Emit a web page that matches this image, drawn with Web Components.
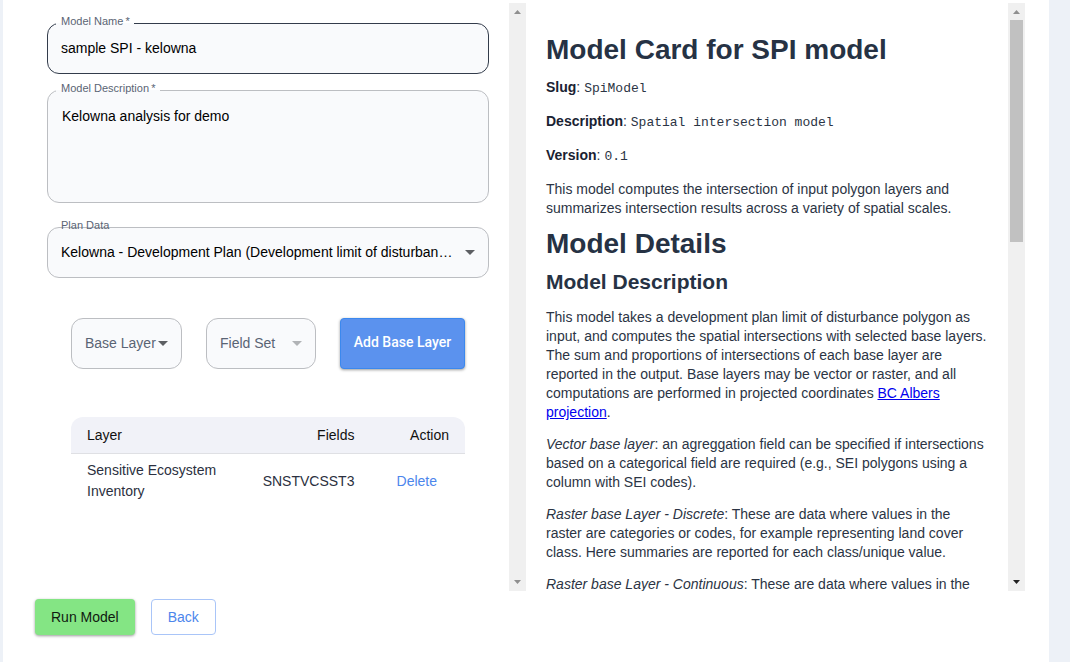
<!DOCTYPE html>
<html lang="en">
<head>
<meta charset="utf-8">
<title>Run Model</title>
<style>
  body { margin: 0; background: #fff; color: #2b3444; font: 14px/19px "Liberation Sans", Arial, sans-serif; }
</style>
</head>
<body>
<model-page>
  <scroll-pane slot="form">
    <model-form></model-form>
  </scroll-pane>
  <scroll-pane slot="card" thumb>
    <model-card></model-card>
  </scroll-pane>
  <action-button slot="actions" kind="run">Run Model</action-button>
  <action-button slot="actions" kind="outline">Back</action-button>
</model-page>

<script>
  const define = (name, html, setup) => {
    const template = document.createElement('template');
    template.innerHTML = '<style>*{box-sizing:border-box}</style>' + html;
    customElements.define(name, class extends HTMLElement {
      constructor() {
        super();
        this.attachShadow({ mode: 'open' }).append(template.content.cloneNode(true));
      }
      connectedCallback() {
        if (setup && !this.ready) { this.ready = true; setup(this, this.shadowRoot); }
      }
    });
  };

  define('model-page', `
    <style>
      :host { display: flex; height: 100vh; background: #edf1f7; margin-right: 9px; padding: 0 21px 0 3px; box-sizing: border-box; }
      main { flex: 1; min-width: 0; display: flex; flex-direction: column; background: #fff; padding: 3px 24px 0 32px; }
      .panes { flex: 1; min-height: 0; display: grid; grid-template-columns: 491fr 499fr; grid-template-rows: minmax(0, 1fr); }
      footer { display: flex; gap: 16px; padding: 8px 0 27px; }
    </style>
    <main>
      <div class="panes"><slot name="form"></slot><slot name="card"></slot></div>
      <footer><slot name="actions"></slot></footer>
    </main>`);

  define('scroll-pane', `
    <style>
      :host { display: flex; min-width: 0; }
      .view { flex: 1; min-width: 0; overflow: hidden; }
      .bar { width: 17px; background: #f0f0f0; display: flex; flex-direction: column; align-items: center; }
      svg { display: block; width: 17px; height: 17px; fill: #8f8f8f; }
      .track { flex: 1; width: 13px; }
      .thumb { display: none; height: 40%; background: #c1c1c1; }
      :host([thumb]) .thumb { display: block; }
      :host([thumb]) .down { fill: #222; }
    </style>
    <div class="view"><slot></slot></div>
    <div class="bar" aria-hidden="true">
      <svg viewBox="0 0 17 17"><path d="M5 11h7L8.500 7z"/></svg>
      <div class="track"><div class="thumb"></div></div>
      <svg class="down" viewBox="0 0 17 17"><path d="M5 6h7L8.500 10z"/></svg>
    </div>`);

  define('action-button', `
    <style>
      :host { display: block; }
      button { font: inherit; height: 36px; padding: 0 16px; border-radius: 4px; border: 0; cursor: pointer; width: 100%; }
      :host([kind=run]) button { background: #84e584; color: #101a10; box-shadow: 0 1px 3px rgba(0,0,0,.4); }
      :host([kind=outline]) button { background: #fff; color: #4c86ec; border: 1px solid #a9c5f8; }
      :host([kind=primary]) button { background: #5b92ee; color: #fff; border: 1px solid #3b88ee; font-family: Roboto, sans-serif; font-weight: 500; height: 51px; padding: 0 8px 2px; box-shadow: 0 1px 3px rgba(0,0,0,.4); }
    </style>
    <button type="button"><slot></slot></button>`);

  const fieldBox = `
      :host { display: block; position: relative; min-width: 0; }
      input, textarea, select { display: block; width: 100%; height: 51px; margin: 0; padding: 0 13px; font: inherit; color: #000;
        background: #f9fafc; border: 1px solid #bcbec2; border-radius: 12px; outline: 0; appearance: none; }
      label { position: absolute; z-index: 1; left: 9px; top: -8px; padding: 0 4px 0 5px; font-size: 11px; line-height: 13px; color: #5a6474; white-space: nowrap; }`;

  define('text-field', `
    <style>${fieldBox}
      label { background: linear-gradient(#fff 8px, #f9fafc 8px); }
      input { padding-bottom: 2px; }
      textarea { height: 113px; padding: 16px 14px; resize: none; }
      :host([active]) input { border-color: #333c4b; }
    </style>
    <label for="control"></label>`,
    (host, root) => {
      const multi = host.hasAttribute('multiline');
      const control = document.createElement(multi ? 'textarea' : 'input');
      control.id = 'control';
      control.value = host.getAttribute('value');
      root.querySelector('label').textContent = host.getAttribute('label') + '\u2009*';
      root.append(control);
    });

  define('select-field', `
    <style>${fieldBox}
      select { padding-right: 32px; text-overflow: ellipsis; }
      :host([compact]) select { color: #5a6474; padding-right: 12px; opacity: 1; }
      svg { position: absolute; right: 14px; top: 23px; width: 10px; height: 5px; fill: #5d5f63; pointer-events: none; }
      :host([disabled]) svg { fill: #b1b3b6; }
    </style>
    <select id="control"><option></option></select>
    <svg viewBox="0 0 10 5" aria-hidden="true"><path d="M0 0h10L5 5z"/></svg>`,
    (host, root) => {
      const select = root.querySelector('select');
      select.options[0].textContent = host.getAttribute('value');
      select.disabled = host.hasAttribute('disabled');
      const text = host.getAttribute('label');
      if (text) {
        const label = document.createElement('label');
        label.htmlFor = 'control';
        label.textContent = text;
        root.append(label);
      } else select.setAttribute('aria-label', host.getAttribute('value'));
    });

  define('layer-table', `
    <style>
      :host { display: block; }
      table { width: 100%; border-collapse: separate; border-spacing: 0; }
      th { background: #f1f2f8; color: #111; font-weight: 400; height: 37px; padding: 0 16px; border-bottom: 1px solid #dfe0e4; text-align: right; }
      th:first-child { text-align: left; border-top-left-radius: 12px; }
      th:last-child { border-top-right-radius: 12px; }
      td { padding: 6px 16px; line-height: 21px; text-align: right; color: #2b3040; }
      td:first-child { text-align: left; width: 44%; }
      td:last-child { width: 24%; padding-right: 28px; }
      button { border: 0; background: none; padding: 0; font: inherit; color: #4c86ec; cursor: pointer; }
      table { table-layout: fixed; }
      th:first-child { width: 44%; }
      th:last-child { width: 24%; }
    </style>
    <table>
      <thead><tr><th>Layer</th><th>Fields</th><th>Action</th></tr></thead>
      <tbody><tr><td>Sensitive Ecosystem Inventory</td><td>SNSTVCSST3</td><td><button type="button">Delete</button></td></tr></tbody>
    </table>`);

  define('model-form', `
    <style>
      :host { display: block; padding: 20px 20px 0 12px; }
      form { display: flex; flex-direction: column; }
      .desc { margin-top: 16px; }
      .plan { margin-top: 24px; }
      .add { display: grid; grid-template-columns: 111fr 110fr 125fr; gap: 24px; margin: 40px 24px 48px; }
      layer-table { margin: 0 24px; }
    </style>
    <form>
      <text-field active label="Model Name" value="sample SPI - kelowna"></text-field>
      <text-field class="desc" multiline label="Model Description" value="Kelowna analysis for demo"></text-field>
      <select-field class="plan" label="Plan Data" value="Kelowna - Development Plan (Development limit of disturban…"></select-field>
      <div class="add">
        <select-field compact value="Base Layer"></select-field>
        <select-field compact disabled value="Field Set"></select-field>
        <action-button kind="primary">Add Base Layer</action-button>
      </div>
      <layer-table></layer-table>
    </form>`);

  define('model-card', `
    <style>
      :host { display: block; padding: 29px 20px 0; }
      h1, h2 { margin: 0; color: #263244; }
      h1 { font-size: 28px; line-height: 36px; }
      h2 { font-size: 21px; line-height: 28px; margin: 6px 0 12px; }
      p { margin: 0 0 13px; }
      dl { margin: 10px 0 0; }
      dl div { margin-bottom: 15px; }
      dt, dd { display: inline; margin: 0; }
      dt { font-weight: 700; color: #1a2232; }
      .intro { margin-bottom: 8px; }
      code { font: 13px/16px "Liberation Mono", monospace; }
      a { color: #0000ee; }
    </style>
    <article>
      <h1>Model Card for SPI model</h1>
      <dl>
        <div><dt>Slug</dt><dd>: <code>SpiModel</code></dd></div>
        <div><dt>Description</dt><dd>: <code>Spatial intersection model</code></dd></div>
        <div><dt>Version</dt><dd>: <code>0.1</code></dd></div>
      </dl>
      <p class="intro">This model computes the intersection of input polygon layers and summarizes intersection results across a variety of spatial scales.</p>
      <h1>Model Details</h1>
      <h2>Model Description</h2>
      <p>This model takes a development plan limit of disturbance polygon as input, and computes the spatial intersections with selected base layers. The sum and proportions of intersections of each base layer are reported in the output. Base layers may be vector or raster, and all computations are performed in projected coordinates <a href="#albers">BC Albers projection</a>.</p>
      <p><i>Vector base layer</i>: an agreggation field can be specified if intersections based on a categorical field are required (e.g., SEI polygons using a column with SEI codes).</p>
      <p><i>Raster base Layer - Discrete</i>: These are data where values in the raster are categories or codes, for example representing land cover class. Here summaries are reported for each class/unique value.</p>
      <p><i>Raster base Layer - Continuous</i>: These are data where values in the</p>
    </article>`);
</script>
</body>
</html>
